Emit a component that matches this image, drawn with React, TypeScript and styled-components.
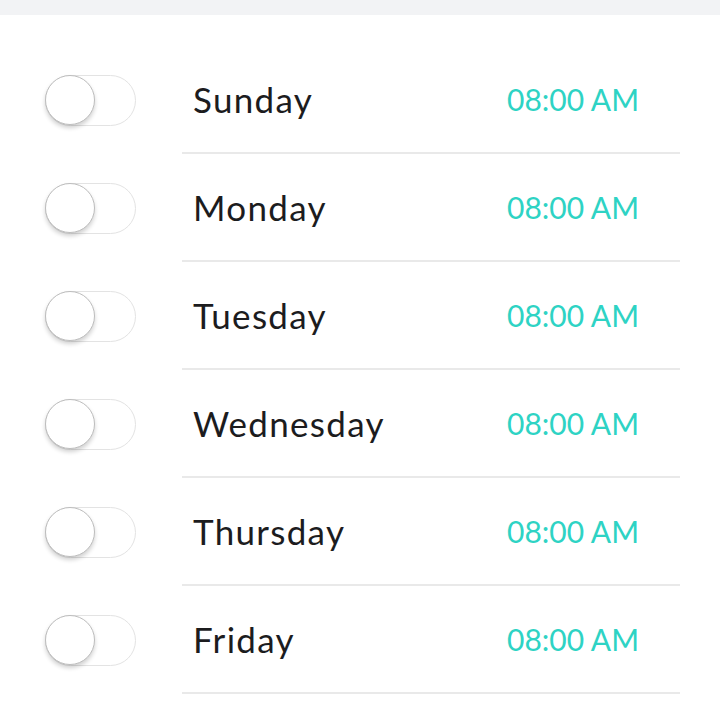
import React from "react";
import styled, { createGlobalStyle } from "styled-components";

const GlobalStyle = createGlobalStyle`
  html, body {
    margin: 0;
    padding: 0;
    background: #ffffff;
  }
  body {
    font-family: "Lato", "Noto Sans", sans-serif;
  }
`;

const s = {
  Page: styled.div`
    width: 720px;
    height: 720px;
    overflow: hidden;
    background: #ffffff;
  `,
  StatusBar: styled.div`
    height: 15px;
    background: #f2f3f5;
  `,
  List: styled.div`
    display: flex;
    flex-direction: column;
    padding-top: 31px;
  `,
  Row: styled.div`
    display: flex;
    align-items: stretch;
    height: 108px;
  `,
  ToggleCell: styled.div`
    width: 182px;
    display: flex;
    align-items: center;
    padding-left: 45px;
    box-sizing: border-box;
  `,
  Track: styled.div<{ $on: boolean }>`
    position: relative;
    width: 91px;
    height: 51px;
    box-sizing: border-box;
    border-radius: 26px;
    border: 1.5px solid ${p => (p.$on ? "#2dd6c6" : "#e3e3e3")};
    background: ${p => (p.$on ? "#2dd6c6" : "#ffffff")};
  `,
  Knob: styled.div<{ $on: boolean }>`
    position: absolute;
    top: -1px;
    left: ${p => (p.$on ? "39px" : "-1px")};
    width: 50px;
    height: 50px;
    box-sizing: border-box;
    border-radius: 50%;
    background: #ffffff;
    border: 1.5px solid #bdbdbd;
    box-shadow: 0 3px 4px rgba(0, 0, 0, 0.18);
  `,
  Content: styled.div`
    flex: 0 0 498px;
    display: flex;
    align-items: center;
    justify-content: space-between;
    border-bottom: 2px solid #e9e9e9;
    box-sizing: border-box;
    padding: 0 41px 0 11px;
  `,
  Day: styled.span`
    font-size: 35px;
    color: #1c1c1e;
    letter-spacing: 1.3px;
  `,
  Time: styled.span`
    font-size: 30px;
    color: #2ed3c4;
  `
};

const days = ["Sunday", "Monday", "Tuesday", "Wednesday", "Thursday", "Friday"];

const App: React.FC = () => {
  return (
    <s.Page>
      <GlobalStyle />
      <s.StatusBar />
      <s.List>
        {days.map(day => (
          <s.Row key={day}>
            <s.ToggleCell>
              <s.Track $on={false}>
                <s.Knob $on={false} />
              </s.Track>
            </s.ToggleCell>
            <s.Content>
              <s.Day>{day}</s.Day>
              <s.Time>08:00 AM</s.Time>
            </s.Content>
          </s.Row>
        ))}
      </s.List>
    </s.Page>
  );
};

export default App;
